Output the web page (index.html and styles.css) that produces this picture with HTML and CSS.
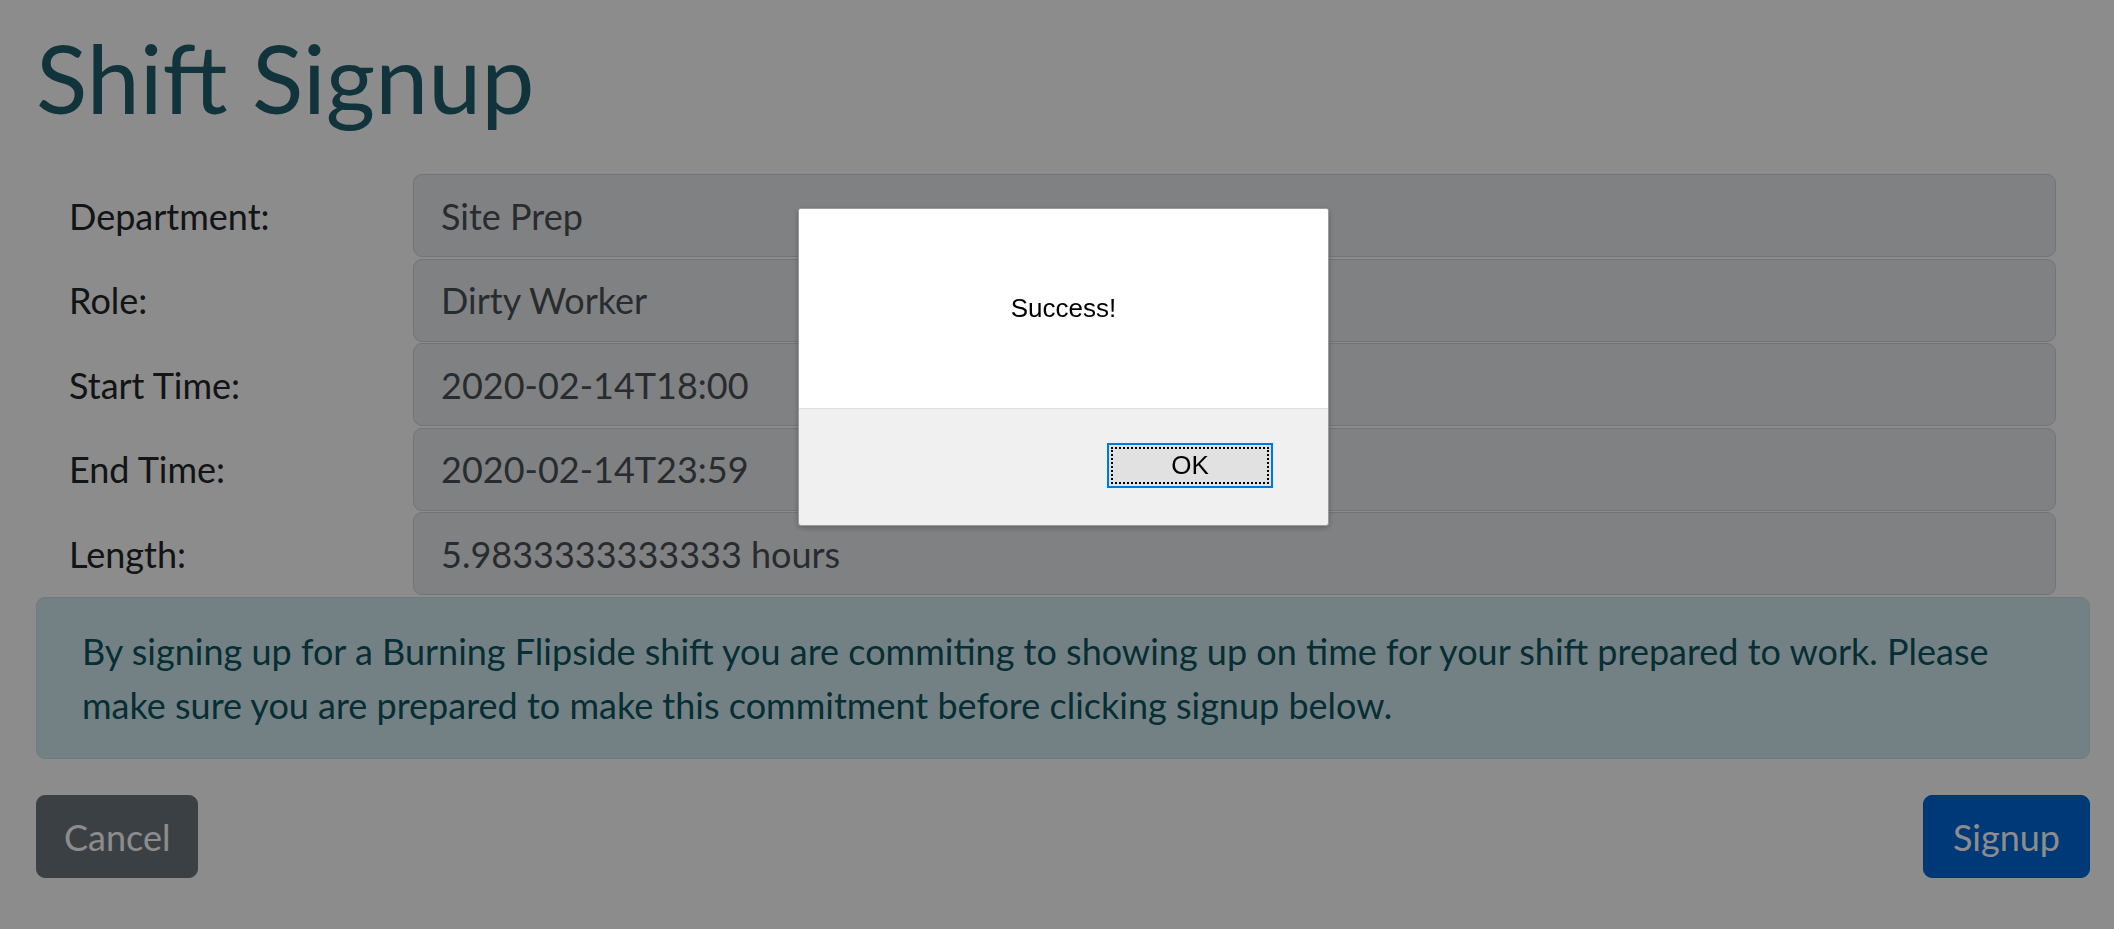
FILE: index.html
```html
<!DOCTYPE html>
<html lang="en">
<head>
<meta charset="utf-8">
<title>Shift Signup</title>
<link rel="stylesheet" href="styles.css">
</head>
<body>
<div class="page">
  <h1 class="title">Shift Signup</h1>
  <div class="form">
    <div class="form-row"><label class="form-label">Department:</label><div class="field">Site Prep</div></div>
    <div class="form-row"><label class="form-label">Role:</label><div class="field">Dirty Worker</div></div>
    <div class="form-row"><label class="form-label">Start Time:</label><div class="field">2020-02-14T18:00</div></div>
    <div class="form-row"><label class="form-label">End Time:</label><div class="field">2020-02-14T23:59</div></div>
    <div class="form-row"><label class="form-label">Length:</label><div class="field">5.9833333333333 hours</div></div>
  </div>
  <div class="alert">By signing up for a Burning Flipside shift you are commiting to showing up on time for your shift prepared to work. Please make sure you are prepared to make this commitment before clicking signup below.</div>
  <div class="actions">
    <button class="btn btn-secondary" type="button">Cancel</button>
    <button class="btn btn-primary" type="button">Signup</button>
  </div>
</div>
<div class="overlay"></div>
<div class="dialog">
  <div class="dialog-body">Success!</div>
  <div class="dialog-footer"><button class="ok-btn" type="button">OK</button></div>
</div>
</body>
</html>
```
FILE: styles.css
```css
html, body {
  margin: 0;
  height: 100%;
  background: #ffffff;
}
body {
  font-family: "Lato", "Liberation Sans", sans-serif;
  font-size: 36px;
  color: #212529;
}
.page {
  padding: 22px 24px 0 36px;
}
.title {
  margin: 0 0 42px 0;
  font-size: 95px;
  line-height: 110px;
  font-weight: 400;
  color: #20606d;
}
.form {
  display: flex;
  flex-direction: column;
  gap: 1.5px;
}
.form-row {
  display: grid;
  grid-template-columns: 377px 1643px;
  height: 83px;
  align-items: center;
}
.form-label {
  padding-left: 33px;
  color: #212529;
}
.field {
  box-sizing: border-box;
  height: 83px;
  display: flex;
  align-items: center;
  padding-left: 27px;
  background: #e9ecef;
  border: 1px solid #ced4da;
  border-radius: 9px;
  color: #495057;
}
.alert {
  margin-top: 2px;
  padding: 26px 45px;
  background: #d1ecf1;
  border: 1px solid #bee5eb;
  border-radius: 9px;
  color: #0c5460;
  line-height: 54px;
}
.actions {
  margin-top: 36px;
  display: flex;
  justify-content: space-between;
}
.btn {
  height: 83px;
  padding: 0 27px;
  font-family: inherit;
  font-size: 36px;
  color: #ffffff;
  border-radius: 9px;
  border: 1px solid transparent;
}
.btn-secondary {
  background: #6c757d;
  border-color: #6c757d;
}
.btn-primary {
  padding: 0 29px;
  background: #0069d9;
  border-color: #0062cc;
}
.overlay {
  position: fixed;
  inset: 0;
  background: rgba(0, 0, 0, 0.45);
}
.dialog {
  position: fixed;
  left: 798px;
  top: 208px;
  width: 531px;
  height: 318px;
  box-sizing: border-box;
  display: flex;
  flex-direction: column;
  background: #f0f0f0;
  border: 1px solid #9a9a9a;
  border-radius: 3px;
  overflow: hidden;
  box-shadow: 0 2px 6px rgba(0, 0, 0, 0.25);
  font-family: "Liberation Sans", Arial, sans-serif;
  color: #000000;
}
.dialog-body {
  height: 199px;
  display: flex;
  align-items: center;
  justify-content: center;
  background: #ffffff;
  border-bottom: 1px solid #dfdfdf;
  font-size: 26px;
}
.dialog-footer {
  flex: 1;
  display: flex;
  align-items: center;
  justify-content: flex-end;
  padding-right: 55px;
  padding-bottom: 4px;
}
.ok-btn {
  width: 166px;
  height: 45px;
  box-sizing: border-box;
  background: #e1e1e1;
  border: 2px solid #0078d7;
  box-shadow: 0 0 0 2px #e5f1fb;
  outline: 2px dotted #000000;
  outline-offset: -6px;
  font-family: "Liberation Sans", Arial, sans-serif;
  font-size: 26px;
  color: #000000;
  padding: 0;
}
```
